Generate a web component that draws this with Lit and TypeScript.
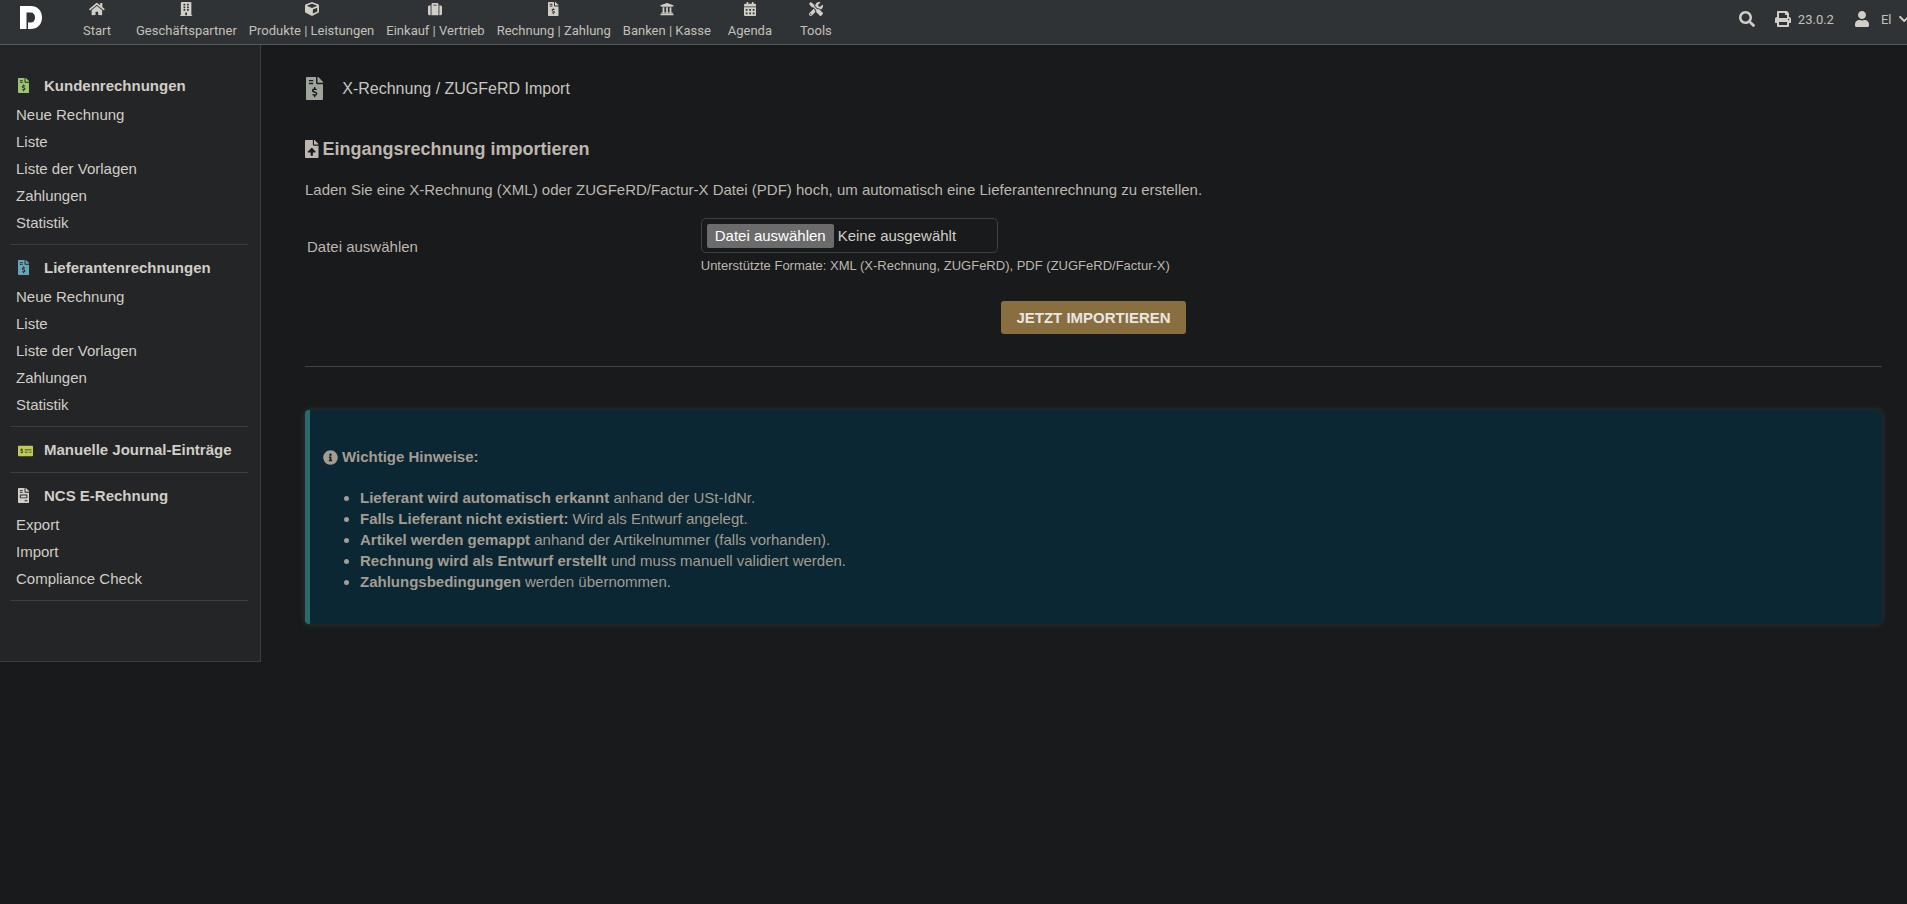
import { LitElement, html, css, svg } from "lit";
import { customElement, property, state } from "lit/decorators.js";

interface Glyph {
  w: number;
  d: string;
}

const DOLLAR_SHEET =
  "M377 105L279.1 7c-4.5-4.5-10.6-7-17-7H256v128h128v-6.1c0-6.3-2.5-12.4-7-16.9zm-153 31V0H24C10.7 0 0 10.7 0 24v464c0 13.3 10.7 24 24 24h336c13.3 0 24-10.7 24-24V160H248c-13.2 0-24-10.8-24-24zM64 72c0-4.42 3.58-8 8-8h80c4.42 0 8 3.58 8 8v16c0 4.42-3.58 8-8 8H72c-4.42 0-8-3.58-8-8V72zm0 80v-16c0-4.42 3.58-8 8-8h80c4.42 0 8 3.58 8 8v16c0 4.42-3.58 8-8 8H72c-4.42 0-8-3.58-8-8zm144 263.88V440c0 4.42-3.58 8-8 8h-16c-4.42 0-8-3.58-8-8v-24.29c-11.29-.58-22.27-4.52-31.37-11.35-3.9-2.93-4.1-8.77-.57-12.14l11.75-11.21c2.77-2.64 6.89-2.76 10.13-.73 3.87 2.42 8.26 3.72 12.82 3.72h28.11c6.5 0 11.8-5.92 11.8-13.19 0-5.95-3.61-11.19-8.77-12.73l-45-13.5c-18.59-5.58-31.58-23.42-31.58-43.39 0-24.52 19.05-44.44 42.67-45.07V232c0-4.42 3.58-8 8-8h16c4.42 0 8 3.58 8 8v24.29c11.29.58 22.27 4.51 31.37 11.35 3.9 2.93 4.1 8.77.57 12.14l-11.75 11.21c-2.77 2.64-6.89 2.76-10.13.73-3.87-2.43-8.26-3.72-12.82-3.72h-28.11c-6.5 0-11.8 5.92-11.8 13.19 0 5.95 3.61 11.19 8.77 12.73l45 13.5c18.59 5.58 31.58 23.42 31.58 43.39 0 24.53-19.05 44.44-42.67 45.07z";

const GLYPHS: Record<string, Glyph> = {
  home: {
    w: 576,
    d: "M280.37 148.26L96 300.11V464a16 16 0 0 0 16 16l112.06-.29a16 16 0 0 0 15.92-16V368a16 16 0 0 1 16-16h64a16 16 0 0 1 16 16v95.64a16 16 0 0 0 16 16.05L464 480a16 16 0 0 0 16-16V300L295.67 148.26a12.19 12.19 0 0 0-15.3 0zM571.6 251.47L488 182.56V44.05a12 12 0 0 0-12-12h-56a12 12 0 0 0-12 12v72.61L318.47 43a48 48 0 0 0-61 0L4.34 251.47a12 12 0 0 0-1.6 16.9l25.5 31A12 12 0 0 0 45.15 301l235.22-193.74a12.19 12.19 0 0 1 15.3 0L530.9 301a12 12 0 0 0 16.9-1.6l25.5-31a12 12 0 0 0-1.7-16.93z",
  },
  building: {
    w: 448,
    d: "M436 480h-20V24c0-13.255-10.745-24-24-24H56C42.745 0 32 10.745 32 24v456H12c-6.627 0-12 5.373-12 12v20h448v-20c0-6.627-5.373-12-12-12zM128 76c0-6.627 5.373-12 12-12h40c6.627 0 12 5.373 12 12v40c0 6.627-5.373 12-12 12h-40c-6.627 0-12-5.373-12-12V76zm0 96c0-6.627 5.373-12 12-12h40c6.627 0 12 5.373 12 12v40c0 6.627-5.373 12-12 12h-40c-6.627 0-12-5.373-12-12v-40zm52 148h-40c-6.627 0-12-5.373-12-12v-40c0-6.627 5.373-12 12-12h40c6.627 0 12 5.373 12 12v40c0 6.627-5.373 12-12 12zm76 160h-64v-84c0-6.627 5.373-12 12-12h40c6.627 0 12 5.373 12 12v84zm64-172c0 6.627-5.373 12-12 12h-40c-6.627 0-12-5.373-12-12v-40c0-6.627 5.373-12 12-12h40c6.627 0 12 5.373 12 12v40zm0-96c0 6.627-5.373 12-12 12h-40c-6.627 0-12-5.373-12-12v-40c0-6.627 5.373-12 12-12h40c6.627 0 12 5.373 12 12v40zm0-96c0 6.627-5.373 12-12 12h-40c-6.627 0-12-5.373-12-12V76c0-6.627 5.373-12 12-12h40c6.627 0 12 5.373 12 12v40z",
  },
  cube: {
    w: 512,
    d: "M239.1 6.3l-208 78c-18.7 7-31.1 25-31.1 45v225.1c0 18.2 10.3 34.8 26.5 42.9l208 104c13.5 6.8 29.4 6.8 42.9 0l208-104c16.3-8.1 26.5-24.8 26.5-42.9V129.3c0-20-12.4-37.9-31.1-44.9l-208-78C262 2.2 250 2.2 239.1 6.3zM256 68.4l192 72v1.1l-192 78-192-78v-1.1l192-72zm32 356V275.5l160-65v133.9l-160 80z",
  },
  suitcase: {
    w: 512,
    d: "M128 480h256V80c0-26.5-21.5-48-48-48H176c-26.5 0-48 21.5-48 48v400zm64-384h128v32H192V96zm320 80v256c0 26.5-21.5 48-48 48h-48V128h48c26.5 0 48 21.5 48 48zM96 480H48c-26.5 0-48-21.5-48-48V176c0-26.5 21.5-48 48-48h48v352z",
  },
  invoiceDollar: { w: 384, d: DOLLAR_SHEET },
  invoice: {
    w: 384,
    d: "M288 256H96v64h192v-64zm89-151L279.1 7c-4.5-4.5-10.6-7-17-7H256v128h128v-6.1c0-6.3-2.5-12.4-7-16.9zm-153 31V0H24C10.7 0 0 10.7 0 24v464c0 13.3 10.7 24 24 24h336c13.3 0 24-10.7 24-24V160H248c-13.2 0-24-10.8-24-24zM64 72c0-4.42 3.58-8 8-8h80c4.42 0 8 3.58 8 8v16c0 4.42-3.58 8-8 8H72c-4.42 0-8-3.58-8-8V72zm0 64c0-4.42 3.58-8 8-8h80c4.42 0 8 3.58 8 8v16c0 4.42-3.58 8-8 8H72c-4.42 0-8-3.58-8-8v-16zm256 304c0 4.42-3.58 8-8 8h-80c-4.42 0-8-3.58-8-8v-16c0-4.42 3.58-8 8-8h80c4.42 0 8 3.58 8 8v16zm0-200v96c0 8.84-7.16 16-16 16H80c-8.84 0-16-7.16-16-16v-96c0-8.84 7.16-16 16-16h224c8.84 0 16 7.16 16 16z",
  },
  bank: {
    w: 512,
    d: "M496 128v16a8 8 0 0 1-8 8h-24v12c0 6.627-5.373 12-12 12H60c-6.627 0-12-5.373-12-12v-12H24a8 8 0 0 1-8-8v-16a8 8 0 0 1 4.941-7.392l232-88a7.996 7.996 0 0 1 6.118 0l232 88A8 8 0 0 1 496 128zm-24 304H40c-13.255 0-24 10.745-24 24v16a8 8 0 0 0 8 8h464a8 8 0 0 0 8-8v-16c0-13.255-10.745-24-24-24zM96 192v192H60c-6.627 0-12 5.373-12 12v20h416v-20c0-6.627-5.373-12-12-12h-36V192h-64v192h-64V192h-64v192h-64V192H96z",
  },
  calendar: {
    w: 448,
    d: "M0 464c0 26.5 21.5 48 48 48h352c26.5 0 48-21.5 48-48V192H0v272zm320-196c0-6.6 5.4-12 12-12h40c6.6 0 12 5.4 12 12v40c0 6.6-5.4 12-12 12h-40c-6.6 0-12-5.4-12-12v-40zm0 128c0-6.6 5.4-12 12-12h40c6.6 0 12 5.4 12 12v40c0 6.6-5.4 12-12 12h-40c-6.6 0-12-5.4-12-12v-40zM192 268c0-6.6 5.4-12 12-12h40c6.6 0 12 5.4 12 12v40c0 6.6-5.4 12-12 12h-40c-6.6 0-12-5.4-12-12v-40zm0 128c0-6.6 5.4-12 12-12h40c6.6 0 12 5.4 12 12v40c0 6.6-5.4 12-12 12h-40c-6.6 0-12-5.4-12-12v-40zM64 268c0-6.6 5.4-12 12-12h40c6.6 0 12 5.4 12 12v40c0 6.6-5.4 12-12 12H76c-6.6 0-12-5.4-12-12v-40zm0 128c0-6.6 5.4-12 12-12h40c6.6 0 12 5.4 12 12v40c0 6.6-5.4 12-12 12H76c-6.6 0-12-5.4-12-12v-40zM400 64h-48V16c0-8.8-7.2-16-16-16h-32c-8.8 0-16 7.2-16 16v48H160V16c0-8.8-7.2-16-16-16h-32c-8.8 0-16 7.2-16 16v48H48C21.5 64 0 85.5 0 112v48h448v-48c0-26.5-21.5-48-48-48z",
  },
  tools: {
    w: 512,
    d: "M501.1 395.7L384 278.6c-23.1-23.1-57.6-27.6-85.4-13.9L192 158.1V96L64 0 0 64l96 128h62.1l106.6 106.6c-13.6 27.8-9.2 62.3 13.9 85.4l117.1 117.1c14.6 14.6 38.2 14.6 52.7 0l52.7-52.7c14.5-14.6 14.5-38.2 0-52.7zM331.7 225c28.3 0 54.9 11 74.9 31l19.4 19.4c15.8-6.9 30.8-16.5 43.8-29.5 37.1-37.1 49.7-89.3 37.9-136.7-2.2-9-13.5-12.1-20.1-5.5l-74.4 74.4-67.9-11.3L334 98.9l74.4-74.4c6.6-6.6 3.4-17.9-5.7-20.2-47.4-11.7-99.6.9-136.6 37.9-28.5 28.5-41.9 66.1-41.2 103.6l82.1 82.1c8.1-1.9 16.5-2.9 24.7-2.9zm-103.9 82l-56.7-56.7L18.7 402.8c-25 25-25 65.5 0 90.5s65.5 25 90.5 0l123.6-123.6c-7.6-19.9-9.9-41.6-5-62.7zM64 472c-13.2 0-24-10.8-24-24 0-13.3 10.7-24 24-24s24 10.7 24 24c0 13.2-10.7 24-24 24z",
  },
  search: {
    w: 512,
    d: "M505 442.7L405.3 343c-4.5-4.5-10.6-7-17-7H372c27.6-35.3 44-79.7 44-128C416 93.1 322.9 0 208 0S0 93.1 0 208s93.1 208 208 208c48.3 0 92.7-16.4 128-44v16.3c0 6.4 2.5 12.5 7 17l99.7 99.7c9.4 9.4 24.6 9.4 33.9 0l28.3-28.3c9.4-9.4 9.4-24.6.1-34zM208 336c-70.7 0-128-57.2-128-128 0-70.7 57.2-128 128-128 70.7 0 128 57.2 128 128 0 70.7-57.2 128-128 128z",
  },
  print: {
    w: 512,
    d: "M448 192V77.25c0-8.49-3.37-16.62-9.37-22.63L393.37 9.37c-6-6-14.14-9.37-22.63-9.37H96C78.33 0 64 14.33 64 32v160c-35.35 0-64 28.65-64 64v112c0 8.84 7.16 16 16 16h48v96c0 17.67 14.33 32 32 32h320c17.67 0 32-14.33 32-32v-96h48c8.84 0 16-7.16 16-16V256c0-35.35-28.65-64-64-64zm-64 256H128v-96h256v96zm0-224H128V64h192v48c0 8.84 7.16 16 16 16h48v96zm48 72c-13.25 0-24-10.75-24-24 0-13.26 10.75-24 24-24s24 10.74 24 24c0 13.25-10.75 24-24 24z",
  },
  user: {
    w: 448,
    d: "M224 256c70.7 0 128-57.3 128-128S294.7 0 224 0 96 57.3 96 128s57.3 128 128 128zm89.6 32h-16.7c-22.2 10.2-46.9 16-72.9 16s-50.6-5.8-72.9-16h-16.7C60.2 288 0 348.2 0 422.4V464c0 26.5 21.5 48 48 48h352c26.5 0 48-21.5 48-48v-41.6c0-74.2-60.2-134.4-134.4-134.4z",
  },
  chevron: {
    w: 448,
    d: "M207.029 381.476L12.686 187.132c-9.373-9.373-9.373-24.569 0-33.941l22.667-22.667c9.357-9.357 24.522-9.375 33.901-.04L224 284.505l154.745-154.021c9.379-9.335 24.544-9.317 33.901.04l22.667 22.667c9.373 9.373 9.373 24.569 0 33.941L240.971 381.476c-9.373 9.372-24.569 9.372-33.942 0z",
  },
  info: {
    w: 512,
    d: "M256 8C119.043 8 8 119.083 8 256c0 136.997 111.043 248 248 248s248-111.003 248-248C504 119.083 392.957 8 256 8zm0 110c23.196 0 42 18.804 42 42s-18.804 42-42 42-42-18.804-42-42 18.804-42 42-42zm56 254c0 6.627-5.373 12-12 12h-88c-6.627 0-12-5.373-12-12v-24c0-6.627 5.373-12 12-12h12v-64h-12c-6.627 0-12-5.373-12-12v-24c0-6.627 5.373-12 12-12h64c6.627 0 12 5.373 12 12v100h12c6.627 0 12 5.373 12 12v24z",
  },
  upload: {
    w: 384,
    d: "M224 136V0H24C10.7 0 0 10.7 0 24v464c0 13.3 10.7 24 24 24h336c13.3 0 24-10.7 24-24V160H248c-13.2 0-24-10.8-24-24zm65.18 216.01H224v80c0 8.84-7.16 16-16 16h-32c-8.84 0-16-7.16-16-16v-80H94.82c-14.28 0-21.41-17.29-11.27-27.36l96.42-95.7c6.65-6.61 17.39-6.61 24.04 0l96.42 95.7c10.15 10.07 3.03 27.36-11.25 27.36zM377 105L279.1 7c-4.5-4.5-10.6-7-17-7H256v128h128v-6.1c0-6.3-2.5-12.4-7-16.9z",
  },
  check: {
    w: 640,
    d: "M608 32H32C14.33 32 0 46.33 0 64v384c0 17.67 14.33 32 32 32h576c17.67 0 32-14.33 32-32V64c0-17.67-14.33-32-32-32zM176 327.88V344c0 4.42-3.58 8-8 8h-16c-4.42 0-8-3.58-8-8v-16.29c-11.29-.58-22.27-4.52-31.37-11.35-3.9-2.93-4.1-8.77-.57-12.14l11.75-11.21c2.77-2.64 6.89-2.76 10.13-.73 3.87 2.42 8.26 3.72 12.82 3.72h28.11c6.5 0 11.8-5.92 11.8-13.19 0-5.95-3.61-11.19-8.77-12.73l-45-13.5c-18.59-5.58-31.58-23.42-31.58-43.39 0-24.52 19.05-44.44 42.67-45.07V152c0-4.42 3.58-8 8-8h16c4.42 0 8 3.58 8 8v16.29c11.29.58 22.27 4.51 31.37 11.35 3.9 2.93 4.1 8.77.57 12.14l-11.75 11.21c-2.77 2.64-6.89 2.76-10.13.73-3.87-2.43-8.26-3.72-12.82-3.72h-28.11c-6.5 0-11.8 5.92-11.8 13.19 0 5.95 3.61 11.19 8.77 12.73l45 13.5c18.59 5.58 31.58 23.42 31.58 43.39 0 24.53-19.05 44.44-42.67 45.07zM416 312c0 4.42-3.58 8-8 8H296c-4.42 0-8-3.58-8-8v-16c0-4.42 3.58-8 8-8h112c4.42 0 8 3.58 8 8v16zm160 0c0 4.42-3.58 8-8 8h-80c-4.42 0-8-3.58-8-8v-16c0-4.42 3.58-8 8-8h80c4.42 0 8 3.58 8 8v16zm0-96c0 4.42-3.58 8-8 8H296c-4.42 0-8-3.58-8-8v-16c0-4.42 3.58-8 8-8h272c4.42 0 8 3.58 8 8v16z",
  },
};

@customElement("glyph-icon")
class GlyphIcon extends LitElement {
  static styles = css`
    :host {
      display: inline-flex;
      flex: none;
      height: 1em;
    }
    .glyph {
      display: block;
      height: 100%;
      width: auto;
      fill: currentColor;
    }
  `;

  @property() name = "home";

  render() {
    const g = GLYPHS[this.name];
    return html`<svg class="glyph" viewBox="0 0 ${g.w} 512" aria-hidden="true">
      ${svg`<path d=${g.d}></path>`}
    </svg>`;
  }
}

const MENU = [
  { icon: "home", label: "Start" },
  { icon: "building", label: "Geschäftspartner" },
  { icon: "cube", label: "Produkte | Leistungen" },
  { icon: "suitcase", label: "Einkauf | Vertrieb" },
  { icon: "invoiceDollar", label: "Rechnung | Zahlung" },
  { icon: "bank", label: "Banken | Kasse" },
  { icon: "calendar", label: "Agenda" },
  { icon: "tools", label: "Tools" },
];

@customElement("top-bar")
class TopBar extends LitElement {
  static styles = css`
    :host {
      display: flex;
      justify-content: space-between;
      height: 44px;
      overflow: hidden;
      background: #2f3335;
      border-bottom: 1px solid #51595d;
      color: #c4c0b8;
      font-family: Roboto, sans-serif;
      font-size: 13px;
    }
    .left,
    .menu,
    .right,
    .tool {
      display: flex;
    }
    .logo {
      width: 64px;
      padding: 6px 0 0 20px;
      box-sizing: border-box;
    }
    .logo svg {
      display: block;
    }
    .menu {
      margin: 0;
      padding: 0;
      list-style: none;
    }
    .entry {
      display: flex;
      flex-direction: column;
      align-items: center;
      box-sizing: border-box;
      min-width: 66px;
      padding: 2px 6px 0;
      color: inherit;
      text-decoration: none;
      line-height: 20px;
      white-space: nowrap;
    }
    .entry glyph-icon {
      font-size: 14px;
      margin-bottom: 5px;
      color: #d1cdc7;
    }
    .right {
      align-items: center;
      height: 38px;
    }
    .tool {
      align-items: center;
      padding: 0;
      border: 0;
      background: none;
      font: inherit;
      color: inherit;
      text-decoration: none;
      white-space: nowrap;
    }
    .tool glyph-icon {
      font-size: 16px;
      color: #d1cdc7;
    }
    .search {
      margin-right: 20px;
    }
    .print {
      gap: 7px;
      margin-right: 21px;
    }
    .account {
      gap: 12px;
      margin-right: -2px;
    }
    .who {
      display: flex;
      align-items: center;
      gap: 7px;
    }
    .account .caret {
      font-size: 12px;
    }
  `;

  render() {
    return html`
      <div class="left">
        <a class="logo" href="#" aria-label="Startseite">
          <svg width="22" height="23" viewBox="0 0 22 23">
            <path
              fill="#fff"
              d="M0 0H10.500C17.500 0 22 4.600 22 11.500S17.500 23 10.500 23H8V16.500H10.500C13.500 16.500 15 14.500 15 11.500S13.500 6.500 10.500 6.500H6.500V23H0Z"
            ></path>
          </svg>
        </a>
        <nav>
          <ul class="menu">
            ${MENU.map(
              (m) => html`<li>
                <a class="entry" href="#"><glyph-icon name=${m.icon}></glyph-icon>${m.label}</a>
              </li>`
            )}
          </ul>
        </nav>
      </div>
      <div class="right">
        <button class="tool search" aria-label="Suche"><glyph-icon name="search"></glyph-icon></button>
        <a class="tool print" href="#"><glyph-icon name="print"></glyph-icon>23.0.2</a>
        <button class="tool account">
          <glyph-icon name="user"></glyph-icon>
          <span class="who">El<glyph-icon class="caret" name="chevron"></glyph-icon></span>
        </button>
      </div>
    `;
  }
}

const SECTIONS = [
  {
    icon: "invoiceDollar",
    tone: "green",
    title: "Kundenrechnungen",
    items: ["Neue Rechnung", "Liste", "Liste der Vorlagen", "Zahlungen", "Statistik"],
  },
  {
    icon: "invoiceDollar",
    tone: "blue",
    title: "Lieferantenrechnungen",
    items: ["Neue Rechnung", "Liste", "Liste der Vorlagen", "Zahlungen", "Statistik"],
  },
  { icon: "check", tone: "lime", title: "Manuelle Journal-Einträge", items: [] as string[] },
  {
    icon: "invoice",
    tone: "plain",
    title: "NCS E-Rechnung",
    items: ["Export", "Import", "Compliance Check"],
  },
];

@customElement("side-menu")
class SideMenu extends LitElement {
  static styles = css`
    :host {
      display: block;
      padding: 18px 12px 60px 10px;
      background: #232526;
      border-right: 1px solid #3a3e41;
      border-bottom: 1px solid #3a3e41;
      color: #d1cdc7;
      font-size: 15px;
    }
    .block {
      box-sizing: border-box;
      min-height: 46px;
      padding: 8px 0 8px 6px;
      border-bottom: 1px solid #3a3e41;
    }
    .head {
      display: grid;
      grid-template-columns: 26px 1fr;
      align-items: center;
      height: 29px;
      padding-left: 2px;
      font-weight: bold;
      white-space: nowrap;
    }
    .items {
      margin: 1px 0 0;
      padding: 0;
      list-style: none;
      line-height: 27px;
    }
    a {
      color: inherit;
      text-decoration: none;
    }
    .green {
      color: #99c66f;
    }
    .blue {
      color: #66a5b9;
    }
    .lime {
      padding-top: 3px;
      color: #bfcb54;
      font-size: 12px;
    }
  `;

  render() {
    return html`<nav>
      ${SECTIONS.map(
        (s) => html`<section class="block">
          <a class="head" href="#"><glyph-icon class=${s.tone} name=${s.icon}></glyph-icon>${s.title}</a>
          ${s.items.length
            ? html`<ul class="items">
                ${s.items.map((i) => html`<li><a href="#">${i}</a></li>`)}
              </ul>`
            : ""}
        </section>`
      )}
    </nav>`;
  }
}

const NOTES: [string, string][] = [
  ["Lieferant wird automatisch erkannt", "anhand der USt-IdNr."],
  ["Falls Lieferant nicht existiert:", "Wird als Entwurf angelegt."],
  ["Artikel werden gemappt", "anhand der Artikelnummer (falls vorhanden)."],
  ["Rechnung wird als Entwurf erstellt", "und muss manuell validiert werden."],
  ["Zahlungsbedingungen", "werden übernommen."],
];

@customElement("import-page")
class ImportPage extends LitElement {
  static styles = css`
    :host {
      display: block;
      padding: 32px 25px 37px 44px;
      color: #bdb7af;
      font-size: 15px;
      line-height: 20px;
    }
    .title {
      display: flex;
      align-items: center;
      gap: 19px;
      margin: 0 0 38px;
      padding-left: 1px;
      color: #c8c6c2;
      font-size: 16px;
      font-weight: normal;
      line-height: 23px;
    }
    .title glyph-icon {
      font-size: 23px;
      color: #9fa59b;
    }
    .heading {
      display: flex;
      align-items: center;
      gap: 4px;
      margin: 0 0 20px;
      font-size: 18px;
      line-height: 22px;
    }
    .lead {
      margin: 0 0 18px;
    }
    .row {
      display: grid;
      grid-template-columns: 1fr 3fr;
      align-items: center;
      padding-left: 2px;
    }
    .picker {
      position: relative;
      display: flex;
      align-items: center;
      gap: 4px;
      box-sizing: border-box;
      width: 297px;
      height: 35px;
      padding: 0 5px;
      border: 1px solid #3c4144;
      border-radius: 5px;
      color: #d1cdc7;
    }
    .picker input {
      position: absolute;
      inset: 0;
      width: 100%;
      opacity: 0;
      cursor: pointer;
    }
    .choose {
      padding: 2px 8px;
      border-radius: 2px;
      background: #6b6b6b;
      color: #fff;
    }
    .hint {
      margin: 4px 0 0;
      font-size: 13px;
      line-height: 18px;
    }
    .actions {
      display: flex;
      justify-content: center;
      margin-top: 26px;
    }
    .submit {
      height: 33px;
      padding: 0 15px;
      border: 0;
      border-radius: 3px;
      background: #896f3f;
      color: #e8e6e3;
      font: bold 15px "Liberation Sans", Arial, sans-serif;
      text-transform: uppercase;
    }
    .rule {
      margin: 32px 0 43px;
      border: 0;
      border-top: 1px solid #3e4446;
    }
    .notice {
      padding: 37px 13px 32px;
      border-left: 5px solid #2b6a6c;
      border-radius: 4px;
      background: #0a2733;
      box-shadow: 0 0 6px #34383a;
      color: #a49c91;
    }
    .notice-title {
      display: flex;
      align-items: center;
      gap: 4px;
      margin: 0 0 20px;
      font-size: 15px;
    }
    .notes {
      margin: 0;
      padding-left: 37px;
      line-height: 21px;
    }
  `;

  @state() private fileName = "Keine ausgewählt";

  private onPick(e: Event) {
    const file = (e.target as HTMLInputElement).files?.[0];
    this.fileName = file ? file.name : "Keine ausgewählt";
  }

  render() {
    return html`
      <h1 class="title"><glyph-icon name="invoiceDollar"></glyph-icon>X-Rechnung / ZUGFeRD Import</h1>
      <h2 class="heading"><glyph-icon name="upload"></glyph-icon>Eingangsrechnung importieren</h2>
      <p class="lead">
        Laden Sie eine X-Rechnung (XML) oder ZUGFeRD/Factur-X Datei (PDF) hoch, um automatisch eine
        Lieferantenrechnung zu erstellen.
      </p>
      <form @submit=${(e: Event) => e.preventDefault()}>
        <div class="row">
          <label for="file">Datei auswählen</label>
          <div>
            <div class="picker">
              <span class="choose" aria-hidden="true">Datei auswählen</span>
              <span>${this.fileName}</span>
              <input id="file" type="file" accept=".xml,.pdf" @change=${this.onPick} />
            </div>
            <p class="hint">Unterstützte Formate: XML (X-Rechnung, ZUGFeRD), PDF (ZUGFeRD/Factur-X)</p>
          </div>
        </div>
        <div class="actions"><button class="submit">Jetzt importieren</button></div>
      </form>
      <hr class="rule" />
      <section class="notice">
        <h3 class="notice-title"><glyph-icon name="info"></glyph-icon>Wichtige Hinweise:</h3>
        <ul class="notes">
          ${NOTES.map(([strong, rest]) => html`<li><strong>${strong}</strong> ${rest}</li>`)}
        </ul>
      </section>
    `;
  }
}

@customElement("app-root")
class AppRoot extends LitElement {
  static styles = css`
    :host {
      display: block;
      min-height: 100vh;
      background: #181a1b;
      font-family: "Liberation Sans", Arial, sans-serif;
    }
    .layout {
      display: grid;
      grid-template-columns: 261px 1fr;
      align-items: start;
    }
  `;

  render() {
    return html`
      <top-bar></top-bar>
      <div class="layout">
        <side-menu></side-menu>
        <main><import-page></import-page></main>
      </div>
    `;
  }
}
